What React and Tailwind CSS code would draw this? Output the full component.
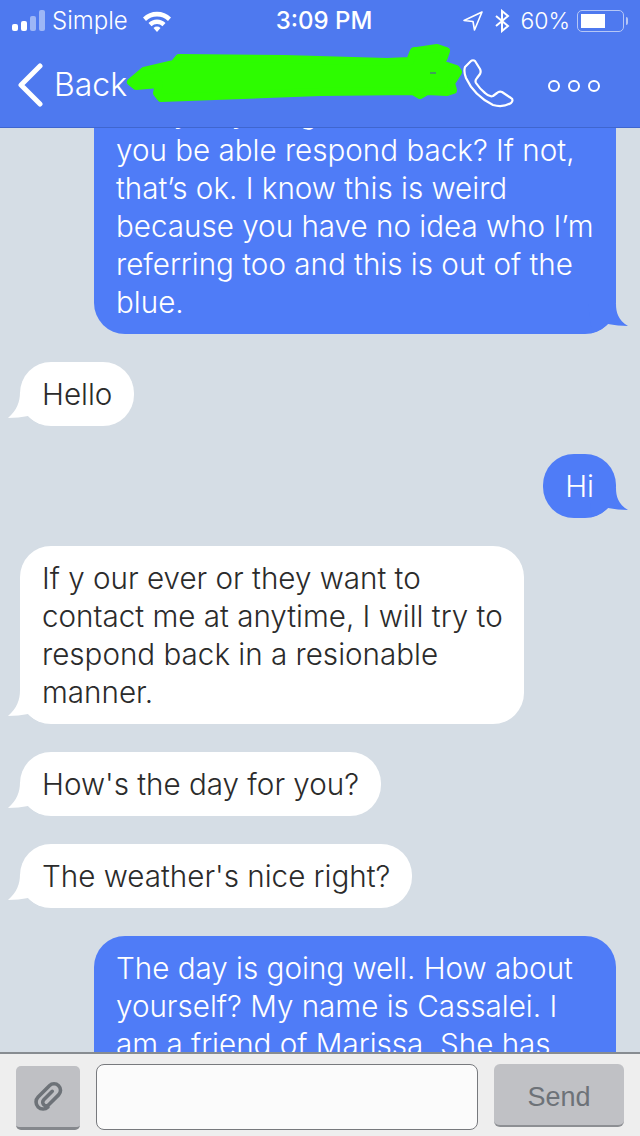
import React from "react";

function TailLeft() {
  return (
    <svg className="absolute left-[-12px] bottom-0" width="40" height="34" viewBox="0 0 40 34">
      <path d="M12 0 C12 10 9 18 0 26 C7 26 14 25 20 24 C24 28 28 30 32 32 L32 0 Z" fill="#ffffff" />
    </svg>
  );
}

function TailRight() {
  return (
    <svg className="absolute right-[-12px] bottom-0" width="40" height="30" viewBox="0 0 40 30">
      <path d="M28 0 C28 8 30 16 40 22 C34 22 26 21 20 20 C16 24 11 27 4 29 L0 0 Z" fill="#4f7cf7" />
    </svg>
  );
}

function In({ children, w }) {
  return (
    <div className={"relative self-start ml-5 rounded-[31px] bg-white px-[22px] py-[13px] text-[#2b2b2b] " + (w || "")}>
      <TailLeft />
      <div className="relative">{children}</div>
    </div>
  );
}

function Out({ children, className }) {
  return (
    <div className={"relative self-end mr-6 rounded-[31px] bg-[#4f7cf7] px-[22px] py-[13px] text-white " + (className || "")}>
      <TailRight />
      <div className="relative">{children}</div>
    </div>
  );
}

export default function App() {
  return (
    <div className="flex h-[1136px] w-[640px] flex-col overflow-hidden bg-[#d5dde5] font-['Inter',sans-serif] text-[29.6px] font-light leading-[38px]">
      <header className="relative z-10 h-[128px] shrink-0 border-b border-[#3f66cf] bg-[#4e79ef] text-white">
        <div className="flex h-[42px] items-center justify-between px-3 text-[24px] font-normal leading-none">
          <div className="flex w-[200px] items-center gap-[6px]">
            <svg width="34" height="22" viewBox="0 0 34 22">
              <rect x="0" y="14" width="6" height="7" rx="2" fill="#fff" />
              <rect x="9" y="11" width="6" height="10" rx="2" fill="#fff" />
              <rect x="18" y="6" width="6" height="15" rx="2" fill="#9db6f6" />
              <rect x="27" y="0" width="6" height="21" rx="2" fill="#9db6f6" />
            </svg>
            <span className="font-light">Simple</span>
            <svg className="ml-2" width="30" height="22" viewBox="0 0 30 22">
              <path d="M1 7.5 A20 20 0 0 1 29 7.5 L26 11 A16 16 0 0 0 4 11 Z" fill="#fff" />
              <path d="M6.5 13 A12 12 0 0 1 23.5 13 L20.5 16.3 A8 8 0 0 0 9.5 16.3 Z" fill="#fff" />
              <path d="M11.5 18 A5 5 0 0 1 18.5 18 L15 22 Z" fill="#fff" />
            </svg>
          </div>
          <span className="w-[120px] text-center font-medium">3:09 PM</span>
          <div className="flex w-[192px] items-center justify-end gap-[10px]">
            <svg width="22" height="22" viewBox="0 0 22 22" fill="none" stroke="#fff" strokeWidth="1.6" strokeLinejoin="round">
              <path d="M20 2 L2 10.5 L11 11.5 L12.5 20 Z" />
            </svg>
            <svg width="16" height="24" viewBox="0 0 16 24" fill="none" stroke="#fff" strokeWidth="2">
              <path d="M2 7 L14 17 L8 22 L8 2 L14 7 L2 17" />
            </svg>
            <span className="text-[23px] font-light">60%</span>
            <div className="-ml-[3px] flex items-center gap-[2px]">
              <div className="h-[22px] w-[47px] rounded-[5px] border border-[#b5c7f6] p-[3px]">
                <div className="h-full w-[62%] bg-white" />
              </div>
              <div className="h-[8px] w-[2px] rounded-r bg-[#b5c7f6]" />
            </div>
          </div>
        </div>
        <div className="relative flex h-[85px] items-center pl-[17px]">
          <svg width="26" height="44" viewBox="0 0 26 44" fill="none" stroke="#fff" strokeWidth="5" strokeLinecap="round" strokeLinejoin="round">
            <path d="M23 3 L4 22 L23 41" />
          </svg>
          <span className="ml-[11px] text-[32px]">Back</span>
          <svg className="absolute left-[124px] top-[2px]" width="342" height="62" viewBox="0 0 342 62">
            <path
              fill="#2dfc00"
              stroke="#2dfc00"
              strokeWidth="8"
              strokeLinejoin="round"
              d="M7 38 L20 27 L50 20 L55 14 L160 15 L263 18 L286 17 L290 7 L293 7 L313 4 L322 7 L320 13 L317 20 L332 25 L334 28 L327 39 L329 46 L323 48 L303 47 L296 51 L289 47 L196 48 L37 54 L33 49 L35 40 L12 42 Z"
            />
            <rect x="306" y="28" width="6" height="2" fill="#3fa05a" />
          </svg>
          <svg className="absolute left-[461px] top-[17px]" width="54" height="50" viewBox="0 0 54 50" fill="none" stroke="#fff" strokeWidth="2.2" strokeLinejoin="round">
            <path d="M4 8 C3 11 3 14 5 19 C10 30 20 40 32 46 C39 48 45 47 50 44 C52 42 52 40 50 39 L41 33 C39 32 38 32 36 34 L32 37 C29 38 27 37 24 34 C20 31 17 27 15 24 C14 22 15 20 16 19 L19 15 C20 13 20 12 19 10 L14 2 C13 1 11 1 10 2 Z" />
          </svg>
          <div className="absolute left-[548px] top-[38px] flex gap-[8px]">
            <div className="h-[12px] w-[12px] rounded-full border-2 border-white" />
            <div className="h-[12px] w-[12px] rounded-full border-2 border-white" />
            <div className="h-[12px] w-[12px] rounded-full border-2 border-white" />
          </div>
        </div>
      </header>

      <main className="flex min-h-0 flex-1 flex-col gap-7 overflow-hidden">
        <Out className="-mt-[48px] w-[522px] shrink-0">
          <div className="whitespace-nowrap">really anything about. Would</div>
          <div className="whitespace-nowrap">you be able respond back? If not,</div>
          <div className="whitespace-nowrap">that’s ok. I know this is weird</div>
          <div className="whitespace-nowrap">because you have no idea who I’m</div>
          <div className="whitespace-nowrap">referring too and this is out of the</div>
          <div className="whitespace-nowrap">blue.</div>
        </Out>
        <In>Hello</In>
        <Out>Hi</Out>
        <In w="w-[504px]">
          <div className="whitespace-nowrap">If y our ever or they want to</div>
          <div className="whitespace-nowrap">contact me at anytime, I will try to</div>
          <div className="whitespace-nowrap">respond back in a resionable</div>
          <div className="whitespace-nowrap">manner.</div>
        </In>
        <In>How's the day for you?</In>
        <In>The weather's nice right?</In>
        <Out className="w-[522px] shrink-0">
          <div className="whitespace-nowrap">The day is going well. How about</div>
          <div className="whitespace-nowrap">yourself? My name is Cassalei. I</div>
          <div className="whitespace-nowrap">am a friend of Marissa. She has</div>
          <div className="whitespace-nowrap">told me about you.</div>
        </Out>
      </main>

      <footer className="relative z-10 flex h-[84px] shrink-0 items-start gap-4 border-t-2 border-[#878c91] bg-[#eeeeee] pl-4 pr-4 pt-[10px]">
        <button className="mt-[2px] flex h-[64px] w-[64px] shrink-0 items-center justify-center rounded-[5px] border-b-[3px] border-[#85888d] bg-[#bfc0c4]">
          <svg width="40" height="40" viewBox="0 0 40 40" fill="none" stroke="#6d7278" strokeWidth="3.6" strokeLinecap="round">
            <g transform="rotate(45 20 20)">
              <path d="M19 13 V25 a3.5 3.5 0 0 0 7 0 V11 a6.5 6.5 0 0 0 -13 0 V27 a7 7 0 0 0 14 0" />
            </g>
          </svg>
        </button>
        <div className="h-[66px] w-[382px] shrink-0 rounded-[8px] border border-[#77797d] bg-[#fbfbfb]" />
        <button className="flex h-[63px] w-[130px] shrink-0 items-center justify-center rounded-[6px] border-b-[2px] border-[#8d8f93] bg-[#c0c1c5] pt-[5px] font-['Liberation_Sans',sans-serif] text-[27px] font-normal text-[#6d7278]">
          Send
        </button>
      </footer>
    </div>
  );
}
